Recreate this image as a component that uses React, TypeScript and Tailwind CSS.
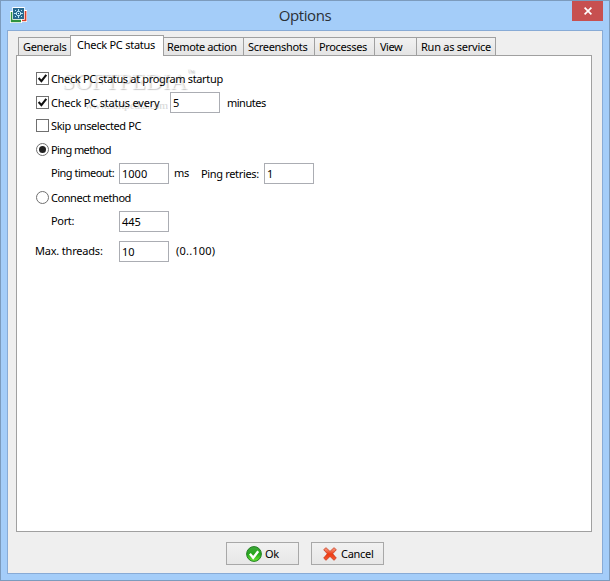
import type { ReactNode } from "react";

type TabItem = {
  label: string;
  tab: string;
};

const TABS: TabItem[] = [
  { label: "Generals", tab: "w-[53px] pl-[4px] tracking-[-0.3px]" },
  { label: "Check PC status", tab: "w-[94px] pl-[6px] tracking-[-0.25px]" },
  { label: "Remote action", tab: "w-[81px] pl-[3px] tracking-[-0.4px]" },
  { label: "Screenshots", tab: "w-[72px] pl-[4px] tracking-[-0.3px]" },
  { label: "Processes", tab: "w-[61px] pl-[4px] tracking-[-0.35px]" },
  { label: "View", tab: "w-[43px] pl-[5px] tracking-[-0.5px]" },
  { label: "Run as service", tab: "w-[80px] pl-[4px] tracking-[-0.25px]" },
];

const ACTIVE_TAB = "Check PC status";

function AppIcon() {
  return (
    <svg width="17" height="16" viewBox="0 0 17 16">
      <path d="M5 3h12v12H5z" fill="#fff" />
      <path d="M6 4h10.4v10.2H6z" fill="#d8402b" />
      <path d="M0 4h12v12H0z" fill="#fff" />
      <path d="M.8 5h10.2v10.2H.8z" fill="#2f9340" />
      <path d="M2.3 0h12.4v12.8H2.3z" fill="#fff" />
      <path d="M3 1h11v11H3z" fill="#28688e" />
      <path
        d="M8 2h1v2H8zM8 9h1v2H8zM4 6h2v1H4zM11 6h2v1h-2zM5 3h1v1H5zM11 3h1v1h-1zM5 9h1v1H5zM11 9h1v1h-1zM7 4h3v1H7zM6 5h1v3H6zM10 5h1v3h-1zM7 8h3v1H7z"
        fill="#b9e5f5"
      />
      <path d="M8 6h1v1H8z" fill="#fff" />
    </svg>
  );
}

function OkIcon() {
  return (
    <svg width="16" height="16" viewBox="0 0 16 16">
      <defs>
        <linearGradient id="ok" x1="0" y1="0" x2="0" y2="1">
          <stop offset="0" stopColor="#3fa93a" />
          <stop offset="0.5" stopColor="#25a51c" />
          <stop offset="1" stopColor="#6bea36" />
        </linearGradient>
      </defs>
      <circle cx="8" cy="8" r="7.4" fill="url(#ok)" stroke="#247f25" />
      <path d="M3.9 7.7l3.3 4.1 5-6.5" fill="none" stroke="#fff" strokeWidth="2.3" />
    </svg>
  );
}

function CancelIcon() {
  return (
    <svg width="14" height="14" viewBox="0 0 14 14">
      <defs>
        <linearGradient id="cancel" x1="0" y1="0" x2="0" y2="1">
          <stop offset="0" stopColor="#f9a58d" />
          <stop offset="0.5" stopColor="#ee3a12" />
          <stop offset="1" stopColor="#f45a35" />
        </linearGradient>
      </defs>
      <path
        d="M3 .7L7 4.4 11 .7l2.3 2L9.7 6.8l3.6 4.3-2.3 2.2L7 9.4l-4 3.9-2.3-2.2 3.6-4.3L.7 2.7z"
        fill="url(#cancel)"
        stroke="#c9391b"
        strokeWidth="0.8"
      />
    </svg>
  );
}

function Checkbox({ checked }: { checked?: boolean }) {
  return (
    <span className="mr-[2px] flex size-[13px] shrink-0 items-center justify-center border border-[#707070] bg-white">
      {checked && (
        <svg width="11" height="11" viewBox="0 0 11 11">
          <path d="M1.6 5l2.8 3.1L9.3 1.9" fill="none" stroke="#111" strokeWidth="2.1" />
        </svg>
      )}
    </span>
  );
}

function Radio({ checked }: { checked?: boolean }) {
  return (
    <span className="mr-[2px] flex size-[13px] shrink-0 items-center justify-center rounded-full border border-[#707070] bg-white">
      {checked && <span className="size-[7px] rounded-full bg-[#222]" />}
    </span>
  );
}

function Field({ value }: { value: string }) {
  return (
    <span className="flex h-[21px] w-[50px] shrink-0 items-center border border-[#abadb3] bg-white pl-[2px] tracking-[0px]">
      {value}
    </span>
  );
}

function Row({ className, children }: { className: string; children: ReactNode }) {
  return <div className={`flex items-center ${className}`}>{children}</div>;
}

export default function App() {
  return (
    <div className="flex h-[581px] w-[610px] flex-col border border-[#7c9bbd] bg-[#a4cdf9] font-['Noto_Sans','Open_Sans',sans-serif] text-[11px] leading-[14px] whitespace-nowrap text-black">
      {/* Title bar */}
      <div className="grid h-[29px] shrink-0 grid-cols-[1fr_auto_1fr] items-start">
        <div className="pt-[6px] pl-[9px]">
          <AppIcon />
        </div>
        <div className="pt-[4px] font-['Open_Sans',sans-serif] text-[15px] leading-[20px] tracking-[-0.4px] text-[#2b3036]">
          Options
        </div>
        <div className="flex justify-end pr-[6px]">
          <button type="button" className="flex h-[20px] w-[31px] items-center justify-center bg-[#c75050]">
            <svg width="8" height="8" viewBox="0 0 8 8">
              <path d="M.6.6l6.8 6.8M7.4.6L.6 7.4" stroke="#fff" strokeWidth="1.7" />
            </svg>
          </button>
        </div>
      </div>

      {/* Client area */}
      <div className="mx-[6px] mb-[6px] flex min-h-0 flex-1 flex-col border border-[#88abd6] bg-[#efefef] px-[8px] pt-[4px]">
        <div className="z-10 -mb-px flex h-[21px] shrink-0 items-end pl-[2px]">
          {TABS.map((t) =>
            t.label === ACTIVE_TAB ? (
              <div
                key={t.label}
                className={`-ml-px h-[21px] shrink-0 border border-b-0 border-[#a0a0a0] bg-white pt-[2px] ${t.tab}`}
              >
                {t.label}
              </div>
            ) : (
              <div
                key={t.label}
                className={`-ml-px h-[19px] shrink-0 border border-[#a0a0a0] bg-linear-to-b from-[#f2f2f2] to-[#e4e4e4] pt-[2px] first:ml-0 ${t.tab}`}
              >
                {t.label}
              </div>
            ),
          )}
        </div>

        <div className="relative isolate h-[477px] w-[576px] shrink-0 border border-[#a0a0a0] bg-white pt-[11px] pl-[19px] tracking-[-0.34px]">
          <Row className="h-[23px]">
            <Checkbox checked />
            Check PC status at program startup
          </Row>
          <Row className="h-[25px]">
            <Checkbox checked />
            <span className="w-[119px] tracking-[-0.2px]">Check PC status every</span>
            <Field value="5" />
            <span className="pl-[7px] tracking-[-0.5px]">minutes</span>
          </Row>
          <Row className="h-[21px]">
            <Checkbox />
            <span className="tracking-[-0.4px]">Skip unselected PC</span>
          </Row>
          <Row className="h-[27px]">
            <Radio checked />
            <span className="tracking-[-0.6px]">Ping method</span>
          </Row>
          <Row className="h-[21px] pl-[15px]">
            <span className="w-[68px] pb-[2px] tracking-[-0.5px]">Ping timeout:</span>
            <Field value="1000" />
            <span className="w-[32px] pb-[2px] pl-[5px]">ms</span>
            <span className="w-[63px]">Ping retries:</span>
            <Field value="1" />
          </Row>
          <Row className="h-[27px]">
            <Radio />
            <span className="tracking-[-0.45px]">Connect method</span>
          </Row>
          <Row className="h-[21px] pl-[15px]">
            <span className="w-[68px] pb-[2px]">Port:</span>
            <Field value="445" />
          </Row>
          <Row className="mt-[9px] h-[21px]">
            <span className="-ml-px w-[84px] pb-[2px] tracking-[-0.2px]">Max. threads:</span>
            <Field value="10" />
            <span className="pb-[2px] pl-[7px] tracking-[0.2px]">(0..100)</span>
          </Row>

          {/* Watermark */}
          <div className="pointer-events-none absolute top-[13px] left-[45px] -z-10 font-['Liberation_Serif',serif]">
            <div className="flex items-start text-[23px] leading-[25px] tracking-[0.1px] text-white/70 [text-shadow:1px_1px_1px_rgb(0_0_0/0.22)]">
              SOFTPEDIA
              <span className="text-[8px] leading-[8px] text-black/15">™</span>
            </div>
            <div className="pl-[23px] text-[11px] leading-[22px] font-bold tracking-[-0.5px] text-black/15">
              www.softpedia.com
            </div>
          </div>
        </div>

        {/* Dialog buttons */}
        <div className="flex justify-center gap-[12px] pt-[10px]">
          <button
            type="button"
            className="flex h-[23px] w-[73px] items-center border border-[#a8a8a8] bg-linear-to-b from-[#f1f1f1] to-[#e7e7e7] pl-[19px]"
          >
            <OkIcon />
            <span className="pl-[3px] tracking-[-0.3px]">Ok</span>
          </button>
          <button
            type="button"
            className="flex h-[23px] w-[73px] items-center border border-[#a8a8a8] bg-linear-to-b from-[#f1f1f1] to-[#e7e7e7] pl-[11px]"
          >
            <CancelIcon />
            <span className="pl-[4px] tracking-[-0.3px]">Cancel</span>
          </button>
        </div>
      </div>
    </div>
  );
}
